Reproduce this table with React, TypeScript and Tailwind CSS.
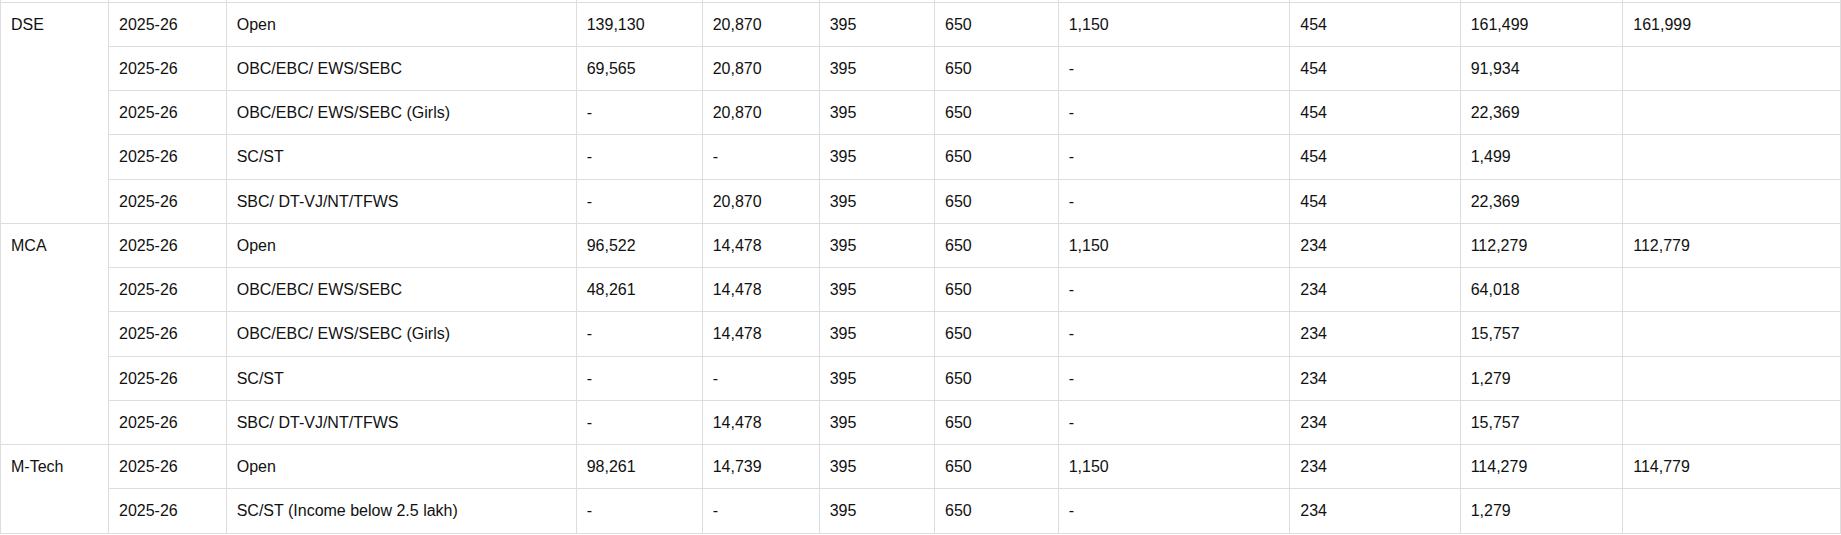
import type { ReactNode } from "react";

/* ── Fee rows, grouped by course ── */

type FeeRow = {
  year: string;
  category: string;
  tuition: string;
  development: string;
  exam: string;
  other: string;
  deposit: string;
  insurance: string;
  total: string;
  grand: string;
};

type CourseGroup = { course: string; rows: FeeRow[] };

const row = (
  category: string,
  tuition: string,
  development: string,
  deposit: string,
  insurance: string,
  total: string,
  grand = ""
): FeeRow => ({
  year: "2025-26",
  category,
  tuition,
  development,
  exam: "395",
  other: "650",
  deposit,
  insurance,
  total,
  grand,
});

const groups: CourseGroup[] = [
  {
    course: "DSE",
    rows: [
      row("Open", "139,130", "20,870", "1,150", "454", "161,499", "161,999"),
      row("OBC/EBC/ EWS/SEBC", "69,565", "20,870", "-", "454", "91,934"),
      row("OBC/EBC/ EWS/SEBC (Girls)", "-", "20,870", "-", "454", "22,369"),
      row("SC/ST", "-", "-", "-", "454", "1,499"),
      row("SBC/ DT-VJ/NT/TFWS", "-", "20,870", "-", "454", "22,369"),
    ],
  },
  {
    course: "MCA",
    rows: [
      row("Open", "96,522", "14,478", "1,150", "234", "112,279", "112,779"),
      row("OBC/EBC/ EWS/SEBC", "48,261", "14,478", "-", "234", "64,018"),
      row("OBC/EBC/ EWS/SEBC (Girls)", "-", "14,478", "-", "234", "15,757"),
      row("SC/ST", "-", "-", "-", "234", "1,279"),
      row("SBC/ DT-VJ/NT/TFWS", "-", "14,478", "-", "234", "15,757"),
    ],
  },
  {
    course: "M-Tech",
    rows: [
      row("Open", "98,261", "14,739", "1,150", "234", "114,279", "114,779"),
      row("SC/ST (Income below 2.5 lakh)", "-", "-", "-", "234", "1,279"),
    ],
  },
];

const colWidths = [
  "w-[108px]",
  "w-[117.7px]",
  "w-[350px]",
  "w-[126px]",
  "w-[117px]",
  "w-[115.3px]",
  "w-[123.7px]",
  "w-[231.6px]",
  "w-[170.4px]",
  "w-[162.6px]",
  "w-[217.7px]",
];

function Cell({ children, rowSpan }: { children?: ReactNode; rowSpan?: number }) {
  return (
    <td
      rowSpan={rowSpan}
      className="border border-[#dddddd] px-[10px] pt-[10.125px] pb-[9.125px] align-top leading-6"
    >
      {children}
    </td>
  );
}

export default function App() {
  return (
    <div className="w-[1841px] overflow-hidden bg-white font-['Liberation_Sans',Arial,sans-serif] text-[16px] text-[#111111]">
      <table className="w-[1841px] table-fixed border-collapse">
        <colgroup>
          {colWidths.map((w, i) => (
            <col key={i} className={w} />
          ))}
        </colgroup>
        <tbody>
          {/* tail of the row above, cut off by the viewport */}
          <tr className="h-[2px]">
            {colWidths.map((_, i) => (
              <td key={i} className="border-x border-[#dddddd] p-0" />
            ))}
          </tr>
          {groups.map((g) =>
            g.rows.map((r, i) => (
              <tr key={g.course + i}>
                {i === 0 && <Cell rowSpan={g.rows.length}>{g.course}</Cell>}
                <Cell>{r.year}</Cell>
                <Cell>{r.category}</Cell>
                <Cell>{r.tuition}</Cell>
                <Cell>{r.development}</Cell>
                <Cell>{r.exam}</Cell>
                <Cell>{r.other}</Cell>
                <Cell>{r.deposit}</Cell>
                <Cell>{r.insurance}</Cell>
                <Cell>{r.total}</Cell>
                <Cell>{r.grand}</Cell>
              </tr>
            ))
          )}
        </tbody>
      </table>
    </div>
  );
}
